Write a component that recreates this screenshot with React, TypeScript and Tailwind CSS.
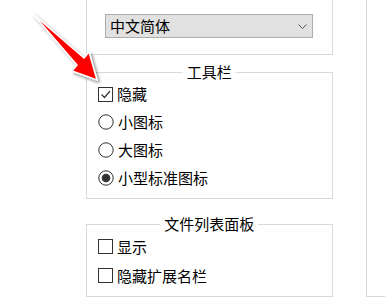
import React from "react";

const FONT = { fontFamily: '"Noto Sans CJK SC", "Microsoft YaHei", sans-serif' };

function CheckBox({ checked }: { checked?: boolean }) {
  return (
    <svg width="15" height="15" viewBox="0 0 15 15" className="shrink-0">
      <rect x="0.5" y="0.5" width="14" height="14" fill="#fff" stroke="#333" />
      {checked && (
        <polyline points="3.5,7.5 6.5,10.5 12,4" fill="none" stroke="#333" strokeWidth="1.2" />
      )}
    </svg>
  );
}

function Radio({ checked }: { checked?: boolean }) {
  return (
    <svg width="16" height="16" viewBox="0 0 16 16" className="shrink-0">
      <circle cx="8" cy="8" r="7.2" fill="#fff" stroke="#333" strokeWidth="1" />
      {checked && <circle cx="8" cy="8" r="4.3" fill="#333" />}
    </svg>
  );
}

function Row({ h, children, label }: { h: string; children: React.ReactNode; label: string }) {
  return (
    <div className={`flex items-center gap-1 pl-[11px] ${h}`}>
      {children}
      <span className="text-[15px] leading-[20px] text-black">{label}</span>
    </div>
  );
}

function Group({ title, children, cls }: { title: string; children: React.ReactNode; cls: string }) {
  return (
    <div className={`relative border border-[#d9d9d9] ${cls}`}>
      <span className="absolute left-1/2 top-[-11px] -translate-x-1/2 bg-white px-1 text-[15px] leading-[20px] text-black whitespace-nowrap">
        {title}
      </span>
      {children}
    </div>
  );
}

export default function App() {
  return (
    <div className="relative w-[385px] h-[300px] bg-white overflow-hidden" style={FONT}>
      <div className="flex">
        <div className="ml-[86px] w-[257px] flex flex-col">
          <div className="h-[55px] border-l border-r border-b border-[#d9d9d9] pl-[18px] pt-[14px]">
            <div className="w-[208px] h-[24px] border border-[#adadad] bg-[#e1e1e1] flex items-center justify-between pl-[4px] pr-[5px]">
              <span className="text-[15px] leading-[20px] text-black">中文简体</span>
              <svg width="9" height="5" viewBox="0 0 9 5">
                <polyline points="0.5,0.5 4.5,4.5 8.5,0.5" fill="none" stroke="#555" strokeWidth="1" />
              </svg>
            </div>
          </div>
          <div className="h-[17px] border-l border-[#d9d9d9]" />
          <Group title="工具栏" cls="h-[127px] pt-[7px]">
            <Row h="h-[28px]" label="隐藏">
              <CheckBox checked />
            </Row>
            <Row h="h-[28px]" label="小图标">
              <Radio />
            </Row>
            <Row h="h-[28px]" label="大图标">
              <Radio />
            </Row>
            <Row h="h-[28px]" label="小型标准图标">
              <Radio checked />
            </Row>
          </Group>
          <Group title="文件列表面板" cls="mt-[25px] h-[73px] pt-[7px]">
            <Row h="h-[29px]" label="显示">
              <CheckBox />
            </Row>
            <Row h="h-[29px]" label="隐藏扩展名栏">
              <CheckBox />
            </Row>
          </Group>
        </div>
        <div className="ml-[33px] w-[20px] h-[297px] border-l border-b border-[#d9d9d9]" />
      </div>

      <svg className="absolute left-0 top-0" width="120" height="100" viewBox="0 0 120 100">
        <defs>
          <filter id="sh" x="-20%" y="-20%" width="150%" height="150%">
            <feDropShadow dx="2" dy="2" stdDeviation="1.5" floodColor="#000" floodOpacity="0.45" />
          </filter>
        </defs>
        <polygon
          points="33,14 84,58 89,52 97,80 72,71 77,65"
          fill="#ff0000"
          stroke="#fff"
          strokeWidth="1.5"
          strokeLinejoin="round"
          filter="url(#sh)"
        />
      </svg>
    </div>
  );
}
